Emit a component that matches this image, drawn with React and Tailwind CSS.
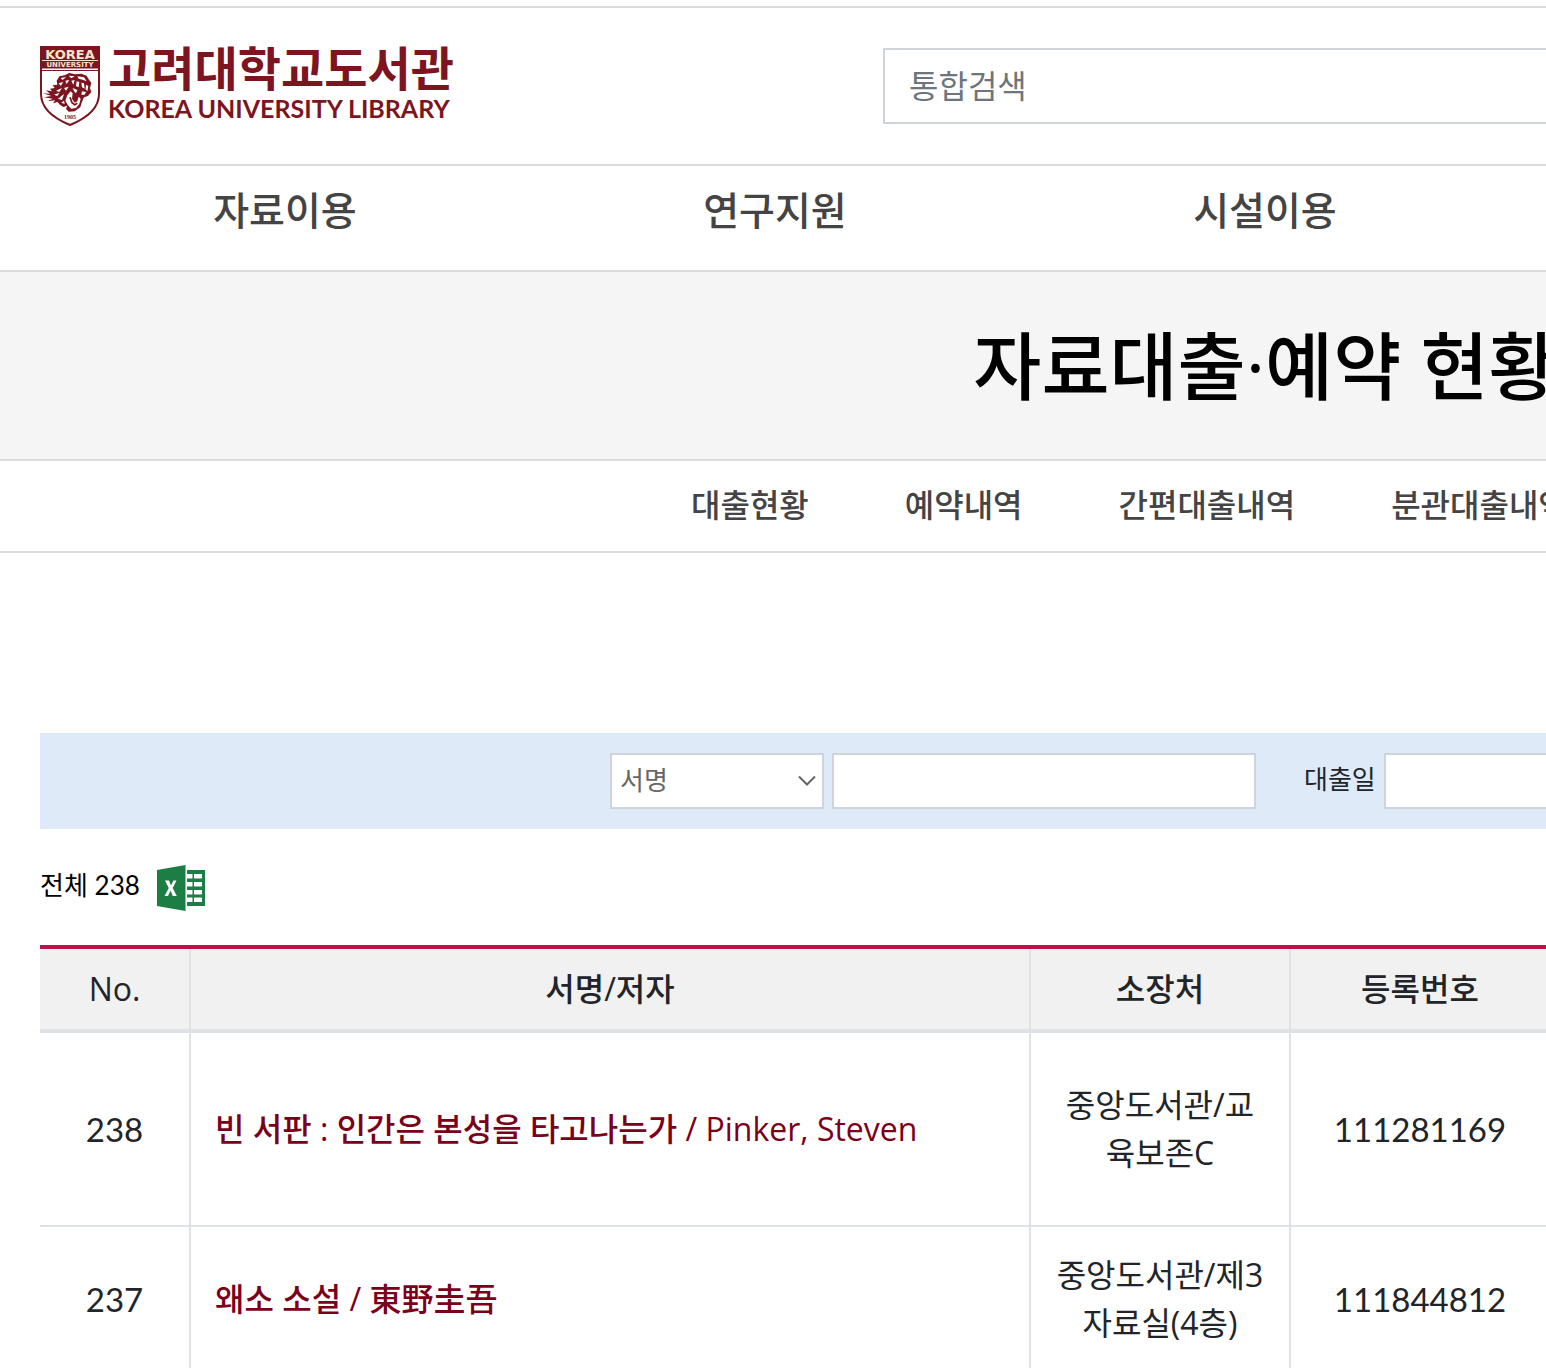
import React from 'react';

const LATIN = "font-['Open_Sans','Noto_Sans_CJK_KR',sans-serif]";

function Crest() {
  return (
    <svg viewBox="0 0 60 80" className="h-20 w-15 shrink-0" aria-hidden="true">
      <path d="M1 1H59V48C59 62 47 72 30 79C13 72 1 62 1 48Z" fill="#fff" stroke="#7d1520" strokeWidth="2" />
      <path d="M0 0H60V22.500H0Z" fill="#7d1520" />
      <path d="M2 14.500H58" stroke="#f3e3cf" strokeWidth="1" />
      <path d="M0 24.500H60" stroke="#7d1520" strokeWidth="1" />
      <text x="30" y="12.500" textAnchor="middle" fontFamily="DejaVu Sans" fontWeight="700" fontSize="13" fill="#f3e3cf">KOREA</text>
      <text x="30" y="21" textAnchor="middle" fontFamily="DejaVu Sans" fontWeight="700" fontSize="7" fill="#f3e3cf">UNIVERSITY</text>
      <g transform="translate(-2 22) scale(.3333)">
        <path d="M56 38L64 25L80 22L94 15L112 19L130 17L146 23L152 34L160 44L156 60L160 72L150 84L138 88L131 104L127 118L110 130L92 131L84 122L88 113L76 117L66 110L58 102L45 106L51 97L28 100L44 92L18 88L40 84L15 76L36 77L24 67L42 70L36 62L50 60L44 52L58 50Z" fill="#7d1520" />
        <g fill="#fff">
          <path d="M82 98L88 82L98 70L104 76L102 92L110 104L118 100L122 86L128 92L124 108L114 120L100 122L90 112Z" />
          <path d="M68 30L84 27L74 36ZM92 23L110 25L100 31ZM118 25L138 28L146 40L134 35L122 32ZM62 46L76 42L68 54ZM82 38L94 36L86 48ZM100 38L110 36L106 50ZM116 40L124 42L122 58L114 54ZM130 44L138 46L140 62L132 58ZM144 50L151 54L148 70L143 64ZM132 70L144 72L140 80L130 80ZM54 68L72 60L64 72ZM48 80L64 74L58 84ZM60 92L78 78L72 96ZM78 60L92 56L84 68ZM104 60L118 66L114 76L108 70ZM70 104L78 98L80 108Z" />
        </g>
        <path d="M96 88L102 104L110 110L118 106" fill="none" stroke="#7d1520" strokeWidth="5" />
      </g>
      <text x="30" y="73" textAnchor="middle" fontFamily="Liberation Serif" fontWeight="700" fontSize="6" fill="#7d1520">1905</text>
    </svg>
  );
}

function ExcelIcon() {
  return (
    <svg viewBox="0 0 48 46" className="h-[46px] w-12" aria-hidden="true">
      <path d="M0 5L28.500 0V46L0 41Z" fill="#1c7d45" />
      <path d="M30 5H48V41H30Z" fill="#1c7d45" />
      <path d="M30 9H35.500V13.500H30ZM37 9H45V13.500H37ZM30 17H35.500V21.500H30ZM37 17H45V21.500H37ZM30 25H35.500V29.500H30ZM37 25H45V29.500H37ZM30 32.500H35.500V37H30ZM37 32.500H45V37H37Z" fill="#fff" />
      <path d="M8 15.500H12L14 20.500L16.500 15.500H19.500L15.700 23L19.800 31H15.800L13.600 25.600L11 31H7.500L11.800 23Z" fill="#fff" />
    </svg>
  );
}

const menu = ['자료이용', '연구지원', '시설이용'];
const tabs = ['대출현황', '예약내역', '간편대출내역', '분관대출내역'];
const columns = ['No.', '서명/저자', '소장처', '등록번호'];
const rows = [
  { no: '238', title: '빈 서판 : 인간은 본성을 타고나는가 / Pinker, Steven', place: '중앙도서관/교육보존C', id: '111281169', height: 'h-[194px]' },
  { no: '237', title: '왜소 소설 / 東野圭吾', place: '중앙도서관/제3자료실(4층)', id: '111844812', height: 'h-[146px]' },
];

export default function App() {
  return (
    <div className={`w-full overflow-x-hidden bg-white pt-1.5 text-[32px] leading-[48px] text-[#212529] ${LATIN}`}>
      <div className="min-w-[2530px]">
        <header className="flex h-40 items-start border-y-2 border-[#dcdcdc] px-10 pt-[38px]">
          <a href="#home" className="flex w-[843px] gap-2 text-[#7d1520]">
            <Crest />
            <span className="flex flex-col whitespace-nowrap">
              <span className="font-['Noto_Sans_CJK_KR',sans-serif] text-[47px] leading-[40px] font-bold">고려대학교도서관</span>
              <span className="mt-[7px] font-['Lato',sans-serif] text-[25px] leading-[30px] font-bold">KOREA UNIVERSITY LIBRARY</span>
            </span>
          </a>
          <input
            type="search"
            aria-label="통합검색"
            placeholder="통합검색"
            className="mt-0.5 h-[76px] w-[764px] border-2 border-[#ced4da] px-6 pb-0.5 placeholder:text-[#6c757d] placeholder:opacity-100"
          />
        </header>
        <nav className="grid h-[106px] grid-cols-5 border-b-2 border-[#dcdcdc] px-10 pt-4">
          {menu.map((item) => (
            <a key={item} href="#menu" className="text-center text-[39px] leading-[56px] font-medium text-[#444]">
              {item}
            </a>
          ))}
        </nav>
        <h1 className="flex h-[189px] items-center justify-center border-b-2 border-[#dcdcdc] bg-[#f5f5f5] text-[74px] leading-[88px] font-medium text-black">
          자료대출·예약 현황
        </h1>
        <nav className="flex h-[92px] items-center gap-24 border-b-2 border-[#dcdcdc] pb-0.5 pl-[691px]">
          {tabs.map((tab) => (
            <a key={tab} href="#tab" className="font-medium whitespace-nowrap text-[#444]">
              {tab}
            </a>
          ))}
        </nav>
        <main className="px-10 pt-[180px]">
          <form className="flex h-24 items-center bg-[#deeaf8] pl-[570px] text-[26px] leading-[40px]">
            <span className="relative mr-2">
              <select aria-label="검색 항목" className="h-14 w-[214px] appearance-none border-2 border-[#ced4da] bg-white px-2 pb-0.5 text-[#666]">
                <option>서명</option>
              </select>
              <svg viewBox="0 0 20 12" className="pointer-events-none absolute top-[22px] right-[7px] h-3 w-5" fill="none" stroke="#666" strokeWidth="2" aria-hidden="true">
                <path d="M2 1.500L10 9.500L18 1.500" />
              </svg>
            </span>
            <input type="text" aria-label="검색어" className="mr-12 h-14 w-[424px] border-2 border-[#ced4da] bg-white px-2" />
            <label htmlFor="loan-date" className="mr-2 pb-1">대출일</label>
            <input id="loan-date" type="text" className="h-14 w-[240px] border-2 border-[#ced4da] bg-white px-2" />
          </form>
          <div className="mt-9 mb-[34px] flex items-center gap-[17px] text-[26px] leading-[40px] text-black">
            <p className="pb-1.5">전체 <span className="font-['Lato',sans-serif]">238</span></p>
            <button type="button" aria-label="엑셀 다운로드">
              <ExcelIcon />
            </button>
          </div>
          <table className="w-full table-fixed border-separate border-spacing-0 border-t-4 border-[#bf1049]">
            <colgroup>
              <col className="w-[151px]" />
              <col className="w-[840px]" />
              <col className="w-[260px]" />
              <col className="w-[260px]" />
              <col />
            </colgroup>
            <thead>
              <tr className="h-[84px] bg-[#f1f1f1]">
                {columns.map((name) => (
                  <th key={name} className="border-r-2 border-b-4 border-[#dee2e6] p-0 font-medium">
                    {name}
                  </th>
                ))}
                <td className="border-b-4 border-[#dee2e6]" />
              </tr>
            </thead>
            <tbody>
              {rows.map((row) => (
                <tr key={row.no} className={row.height}>
                  <td className="border-r-2 border-b-2 border-[#dee2e6] text-center font-['Lato',sans-serif] text-[33px]">{row.no}</td>
                  <td className="border-r-2 border-b-2 border-[#dee2e6] px-6">
                    <a href="#book" className="font-medium text-[#7b0019]">{row.title}</a>
                  </td>
                  <td className="border-r-2 border-b-2 border-[#dee2e6] px-6 text-center break-all">{row.place}</td>
                  <td className="border-r-2 border-b-2 border-[#dee2e6] text-center font-['Lato',sans-serif] text-[33px]">{row.id}</td>
                  <td className="border-b-2 border-[#dee2e6]" />
                </tr>
              ))}
            </tbody>
          </table>
        </main>
      </div>
    </div>
  );
}
